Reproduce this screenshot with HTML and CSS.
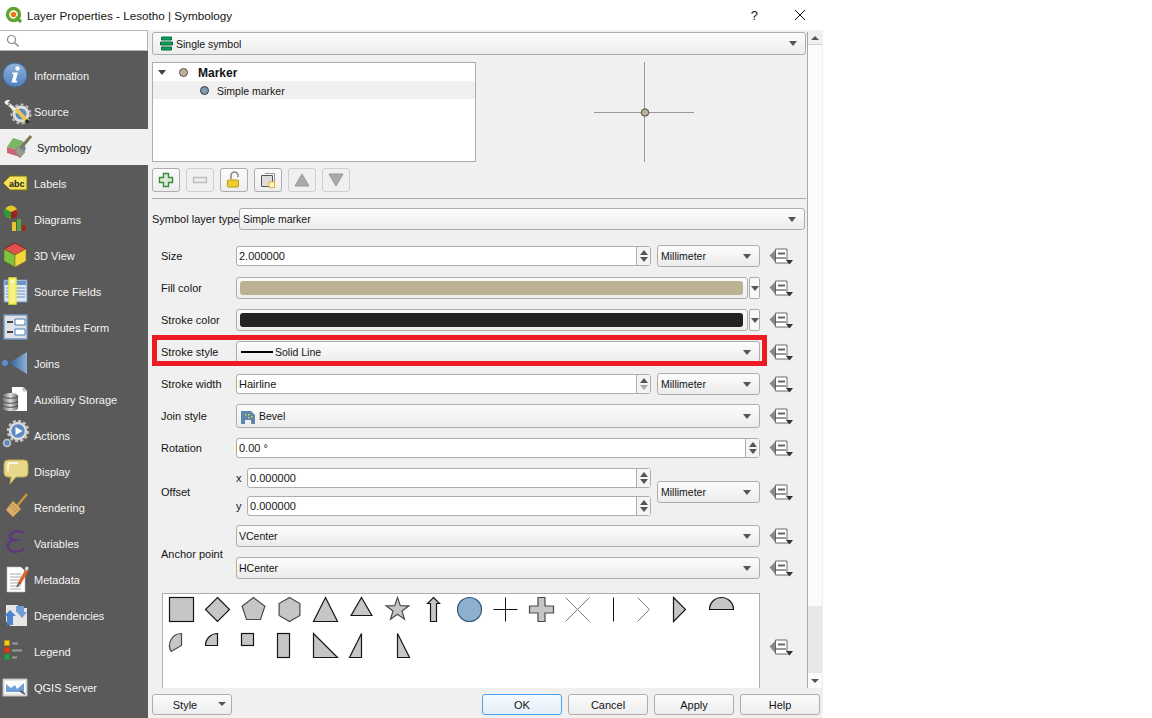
FILE: index.html
```html
<!DOCTYPE html>
<html lang="en">
<head>
<meta charset="utf-8">
<title>Layer Properties - Lesotho | Symbology</title>
<link rel="stylesheet" href="styles.css">
</head>
<body>
<svg class="defs" width="0" height="0" aria-hidden="true">
  <defs>
    <linearGradient id="gBlue" x1="0" y1="0" x2="0" y2="1"><stop offset="0" stop-color="#8fb4dd"/><stop offset="1" stop-color="#4f80bd"/></linearGradient>
    <linearGradient id="gJoin" x1="0" y1="0" x2="1" y2="0"><stop offset="0" stop-color="#2c5f9b"/><stop offset="1" stop-color="#8cb0d6"/></linearGradient>
    <linearGradient id="gDb" x1="0" y1="0" x2="1" y2="0"><stop offset="0" stop-color="#777"/><stop offset=".5" stop-color="#ddd"/><stop offset="1" stop-color="#666"/></linearGradient>
    <symbol id="dd" viewBox="0 0 24 17">
      <path d="M0.5 7.5 6.5 1.5V14.5Z" fill="#8a8a8a"/>
      <path d="M6.5 1H18V12.5H20V15H6.5Z" fill="#fff" stroke="#6a6a6a"/>
      <path d="M9 4.5h7v2h-7z" fill="#666"/>
      <path d="M6 10h11" stroke="#555" stroke-width="1.2"/>
      <path d="M17 12h7l-3.5 4.5z" fill="#333"/>
    </symbol>
  </defs>
</svg>
<div class="window">
  <header class="titlebar">
    <svg class="logo" width="18" height="18" viewBox="0 0 18 18"><circle cx="8.5" cy="8.5" r="6" fill="#fff" stroke="#5fa331" stroke-width="3.4"/><circle cx="8.5" cy="8.5" r="2.8" fill="#ee7913"/><path d="M11 11l5 5" stroke="#5fa331" stroke-width="3.4"/></svg>
    <span class="title-text">Layer Properties - Lesotho | Symbology</span>
    <span class="help-mark">?</span>
    <svg class="close" width="12" height="12" viewBox="0 0 12 12"><path d="M1 1l10 10M11 1L1 11" stroke="#111" fill="none"/></svg>
  </header>
  <div class="body">
    <aside class="sidebar">
      <div class="search"><svg width="14" height="14" viewBox="0 0 14 14"><circle cx="5.5" cy="5.5" r="4" fill="none" stroke="#8a8a8a" stroke-width="1.2"/><path d="M8.5 8.5l4 4" stroke="#8a8a8a" stroke-width="1.6"/></svg></div>
      <nav class="nav">
        <div class="nav-item"><svg class="nav-icon" viewBox="0 0 30 30"><circle cx="13" cy="15" r="12" fill="url(#gBlue)" stroke="#3d6ea8"/><circle cx="15.5" cy="8.5" r="2.2" fill="#fff"/><path d="M10.5 12.5h5.5l-2.4 8.2 2 .1-.8 1.7H9.4l2.4-8.4h-1.8z" fill="#fff"/></svg><span>Information</span></div>
        <div class="nav-item"><svg class="nav-icon" viewBox="0 0 30 30"><circle cx="19" cy="18" r="7" fill="#5d8ac2" stroke="#ddd" stroke-width="3"/><circle cx="19" cy="18" r="9.5" fill="none" stroke="#bbb" stroke-width="2" stroke-dasharray="3 2.5"/><path d="M5 7l11 9" stroke="#eee" stroke-width="3"/><path d="M2 6.5C3 3.500 6 3 9 4L6.500 6.500 7.500 9C5 10 3 9 2 6.500z" fill="#eee" stroke="#333" stroke-width=".7"/><path d="M14 13l11 12" stroke="#e9c94b" stroke-width="4"/><path d="M24 24l2.500 2.500" stroke="#222" stroke-width="3"/></svg><span>Source</span></div>
        <div class="nav-item active"><svg class="nav-icon" viewBox="0 0 30 30"><path d="M9 6l10 3-5 9-11-3z" fill="#7bb765"/><path d="M14 18l5-9 3 8-6 8z" fill="#6788bb"/><path d="M3 15l11 3 2 7-13-4z" fill="#c9677a"/><path d="M16 17l11-13" stroke="#7d7a57" stroke-width="3"/><path d="M14 14l7 6-5 6-5-7z" fill="#9a9a8c" stroke="#777" stroke-width=".5"/></svg><span>Symbology</span></div>
        <div class="nav-item"><svg class="nav-icon" viewBox="0 0 30 30"><path d="M8 8h17v14H8L1 15z" fill="#f3e25a" stroke="#7a6d12" stroke-width="1"/><text class="icon-abc" x="7" y="18.500">abc</text></svg><span>Labels</span></div>
        <div class="nav-item"><svg class="nav-icon" viewBox="0 0 30 30"><circle cx="9" cy="8" r="6.500" fill="#e4c52a"/><path d="M9 8L3 4.500A6.500 6.500 0 0 0 3.500 12L9 15z" fill="#2f9c3a"/><path d="M9 8v7a6.500 6.500 0 0 0 6-9.500z" fill="#9c2420"/><path d="M10 18h4v9h-4z" fill="#e8c530"/><path d="M15 15h4v12h-4z" fill="#56a53e"/><path d="M20 21h4v6h-4z" fill="#a52622"/></svg><span>Diagrams</span></div>
        <div class="nav-item"><svg class="nav-icon" viewBox="0 0 30 30"><path d="M13 3l11 6-11 6L2 9z" fill="#e0524f" stroke="#8c1f1f"/><path d="M2 9l11 6v12L2 21z" fill="#7fc241" stroke="#44761f" stroke-width=".6"/><path d="M24 9l-11 6v12l11-6z" fill="#f2d73a" stroke="#8d7a16" stroke-width=".6"/></svg><span>3D View</span></div>
        <div class="nav-item"><svg class="nav-icon" viewBox="0 0 30 30"><path d="M2 4h23v22H2z" fill="#dfe7f1" stroke="#6d8fb8"/><path d="M3 5h21v4H3z" fill="#6a94c6"/><path d="M13 12h10M13 15h10M13 18h10M13 21h10M4 12h3M4 15h3M4 18h3M4 21h3" stroke="#6a94c6"/><path d="M7 2h7v26H7z" fill="#f6f08a" stroke="#f1ea37" stroke-width="1.400"/><circle cx="10.500" cy="5.500" r="1.200" fill="#fff"/></svg><span>Source Fields</span></div>
        <div class="nav-item"><svg class="nav-icon" viewBox="0 0 30 30"><path d="M2 3h23v24H2z" fill="#dfe3e8" stroke="#7598c2" stroke-width="1.400"/><path d="M13 7h10v6H13zM13 17h10v6H13z" fill="#fff" stroke="#4a7cb5"/><path d="M5 10h6M5 20h6" stroke="#444" stroke-width="2"/></svg><span>Attributes Form</span></div>
        <div class="nav-item"><svg class="nav-icon" viewBox="0 0 30 30"><circle cx="3" cy="15" r="3" fill="#5c8fc9"/><path d="M7 15L25 4v22z" fill="url(#gJoin)"/></svg><span>Joins</span></div>
        <div class="nav-item"><svg class="nav-icon" viewBox="0 0 30 30"><path d="M10 3h11l4 4v20H10z" fill="#fff"/><path d="M21 3v4h4" fill="#ccc" stroke="#aaa" stroke-width=".6"/><path d="M1 12c0-4 15-4 15 0v12c0 4-15 4-15 0z" fill="url(#gDb)"/><path d="M1 12c0 3 15 3 15 0M1 17c0 3 15 3 15 0M1 21c0 3 15 3 15 0" fill="none" stroke="#444"/></svg><span>Auxiliary Storage</span></div>
        <div class="nav-item"><svg class="nav-icon" viewBox="0 0 30 30"><circle cx="16" cy="11" r="8" fill="#5d8ac2" stroke="#ddd" stroke-width="2.500"/><circle cx="16" cy="11" r="10" fill="none" stroke="#c4c4c4" stroke-width="2.500" stroke-dasharray="3 2.200"/><path d="M13.500 7l7 4-7 4z" fill="#fff"/><circle cx="5" cy="23" r="3.500" fill="#5d8ac2" stroke="#c4c4c4" stroke-width="1.500"/></svg><span>Actions</span></div>
        <div class="nav-item"><svg class="nav-icon" viewBox="0 0 30 30"><path d="M6 4h16q4 0 4 4v9q0 4-4 4H14l-6 7 1-7H6q-4 0-4-4V8q0-4 4-4z" fill="#e8d98a" stroke="#b9a84f"/><path d="M6 15V9q0-2 2-2h8" fill="none" stroke="#fff" stroke-width="1.500"/></svg><span>Display</span></div>
        <div class="nav-item"><svg class="nav-icon" viewBox="0 0 30 30"><path d="M15 14L25 2" stroke="#d29a35" stroke-width="2.200"/><path d="M11 9l8 8-8 8-7-7z" fill="#d8ad6e" stroke="#b98636" stroke-width=".6"/><path d="M8 14l6 6M10 12l6 6" stroke="#a87b38" stroke-width=".7"/></svg><span>Rendering</span></div>
        <div class="nav-item"><svg class="nav-icon" viewBox="0 0 30 30"><path d="M22 5c-3-2.500-12-2.500-14 2-1 3 2 5 6 5-5 0-9 2-8 7 1 6 12 6 16 1" fill="none" stroke="#5c3a7c" stroke-width="2.600"/><path d="M11 12h8" stroke="#5c3a7c" stroke-width="1.400"/></svg><span>Variables</span></div>
        <div class="nav-item"><svg class="nav-icon" viewBox="0 0 30 30"><path d="M5 3h14l4 4v21H5z" fill="#fff" stroke="#bbb" stroke-width=".6"/><path d="M8 10h11M8 13h11M8 16h9M8 19h8M8 22h11M8 25h11" stroke="#aaa"/><path d="M17 20L25 6" stroke="#e2632a" stroke-width="3.400"/><path d="M24 6l1.500-3" stroke="#ddd" stroke-width="3"/><path d="M17.500 19L15 23" stroke="#555" stroke-width="1.500"/></svg><span>Metadata</span></div>
        <div class="nav-item"><svg class="nav-icon" viewBox="0 0 30 30"><path d="M4 5h12v3h9v18H8v-4H4z" fill="#e6e6e6"/><path d="M14 6h8v6h3l-5 6-5-6h-1z" fill="#6f9fd6"/><path d="M2 16l6-6 6 6h-3v9H5v-9z" fill="#4c84c8"/></svg><span>Dependencies</span></div>
        <div class="nav-item"><svg class="nav-icon" viewBox="0 0 30 30"><rect x="2.500" y="4.500" width="5" height="5" fill="#f6d000" stroke="#b5892c"/><rect x="2.500" y="11.500" width="5" height="5" fill="#e63a10" stroke="#a0441f"/><rect x="2.500" y="18.500" width="5" height="5" fill="#1da34a" stroke="#3b7d44"/><path d="M10 7.500h6M10 14.500h10M10 21.500h5" stroke="#999" stroke-width="2"/></svg><span>Legend</span></div>
        <div class="nav-item"><svg class="nav-icon" viewBox="0 0 30 30"><path d="M1 7h24v17H1z" fill="#e9e9e9" stroke="#bbb"/><path d="M3 9h20v12H3z" fill="#fff"/><path d="M4 12l5 4 4-3 2 4 7-6v9H4z" fill="#6f9fd6"/><path d="M18 19l5 3" stroke="#555" stroke-width="1.500"/></svg><span>QGIS Server</span></div>
      </nav>
    </aside>
    <main class="main">
      <div class="scroll-row">
        <section class="content">
          <div class="combo combo-top"><svg class="sym-icon" width="13" height="15" viewBox="0 0 13 15"><path d="M1.500 1h10v3h-10zM0.500 6h12v3H0.500zM1.500 11h10v3h-10z" fill="#0fa15a" stroke="#0b6b3a"/></svg><span>Single symbol</span><i class="arrow"></i></div>
          <div class="symbol-row">
            <div class="tree">
              <div class="tree-row"><i class="expander"></i><i class="dot dot-sand"></i><b>Marker</b></div>
              <div class="tree-row tree-row-sel"><i class="dot dot-blue"></i><span>Simple marker</span></div>
            </div>
            <div class="preview"><svg width="100" height="100" viewBox="0 0 100 100"><path d="M0 50.500h100M50.500 0v100" stroke="#999"/><circle cx="51" cy="50.500" r="3.700" fill="#bdb194" stroke="#4a4a4a"/></svg></div>
          </div>
          <div class="tools">
            <div class="tool"><svg width="16" height="16" viewBox="0 0 16 16"><path d="M5.500 1.500h5v4h4v5h-4v4h-5v-4h-4v-5h4z" fill="#dcebd6" stroke="#3e8a41" stroke-width="1.400"/></svg></div>
            <div class="tool tool-off"><svg width="16" height="16" viewBox="0 0 16 16"><path d="M1.500 5.500h13v5h-13z" fill="#eee" stroke="#bbb" stroke-width="1.400"/></svg></div>
            <div class="tool"><svg width="16" height="18" viewBox="0 0 16 18"><path d="M8 8V4.500a3.500 3.500 0 0 1 7 0V6" fill="none" stroke="#8a8a8a" stroke-width="1.600" transform="translate(-3 0)"/><rect x="1.500" y="9" width="11" height="7" rx="1" fill="#f0cd2e" stroke="#b99a16"/></svg></div>
            <div class="tool"><svg width="16" height="16" viewBox="0 0 16 16"><path d="M5 1.500h9.500v9" fill="none" stroke="#999"/><path d="M1.500 3.500h11v11h-11z" fill="#ddd" stroke="#555"/><rect x="9" y="10" width="5.500" height="5.500" fill="#fff5c4" stroke="#d7b73a"/></svg></div>
            <div class="tool tool-off"><svg width="16" height="14" viewBox="0 0 16 14"><path d="M8 1l7 12H1z" fill="#aaa" stroke="#999"/></svg></div>
            <div class="tool tool-off"><svg width="16" height="14" viewBox="0 0 16 14"><path d="M1 1h14L8 13z" fill="#aaa" stroke="#999"/></svg></div>
          </div>
          <hr class="separator">
          <div class="layer-type"><label>Symbol layer type</label><div class="combo"><span>Simple marker</span><i class="arrow"></i></div></div>
          <div class="form">
            <div class="row"><label>Size</label><div class="field"><div class="spin"><span>2.000000</span><div class="spin-btns"><i class="up"></i><i class="down"></i></div></div><div class="combo unit"><span>Millimeter</span><i class="arrow"></i></div></div><svg class="dd"><use href="#dd"/></svg></div>
            <div class="row"><label>Fill color</label><div class="field"><div class="color-btn"><div class="swatch swatch-fill"></div></div><div class="color-menu"><i class="arrow"></i></div></div><svg class="dd"><use href="#dd"/></svg></div>
            <div class="row"><label>Stroke color</label><div class="field"><div class="color-btn"><div class="swatch swatch-stroke"></div></div><div class="color-menu"><i class="arrow"></i></div></div><svg class="dd"><use href="#dd"/></svg></div>
            <div class="row row-flagged"><div class="flag"></div><label>Stroke style</label><div class="field"><div class="combo combo-icon"><i class="line-sample"></i><span>Solid Line</span><i class="arrow"></i></div></div><svg class="dd"><use href="#dd"/></svg></div>
            <div class="row"><label>Stroke width</label><div class="field"><div class="spin"><span>Hairline</span><div class="spin-btns"><i class="up"></i><i class="down off"></i></div></div><div class="combo unit"><span>Millimeter</span><i class="arrow"></i></div></div><svg class="dd"><use href="#dd"/></svg></div>
            <div class="row"><label>Join style</label><div class="field"><div class="combo combo-tall"><svg class="bevel" width="15" height="15" viewBox="0 0 15 15"><path d="M0 2h10l4 4v9h-4v-4H4v4H0z" fill="#5f86ad"/><path d="M4 5h1.500v1.500H4zM7 5h1.500v1.500H7zM10 7h1.500v1.500H10zM7 8h1.500v1.500H7z" fill="#e9cf4a"/></svg><span>Bevel</span><i class="arrow"></i></div></div><svg class="dd"><use href="#dd"/></svg></div>
            <div class="row"><label>Rotation</label><div class="field"><div class="spin"><span>0.00 °</span><div class="spin-btns"><i class="up"></i><i class="down"></i></div></div></div><svg class="dd"><use href="#dd"/></svg></div>
            <div class="row row-offset"><label>Offset</label>
              <div class="field">
                <div class="offset-col">
                  <div class="offset-line"><span class="axis">x</span><div class="spin"><span>0.000000</span><div class="spin-btns"><i class="up"></i><i class="down"></i></div></div></div>
                  <div class="offset-line"><span class="axis">y</span><div class="spin"><span>0.000000</span><div class="spin-btns"><i class="up"></i><i class="down"></i></div></div></div>
                </div>
                <div class="combo unit"><span>Millimeter</span><i class="arrow"></i></div>
              </div><svg class="dd"><use href="#dd"/></svg>
            </div>
            <div class="row-anchor"><label>Anchor point</label>
              <div class="anchor-col">
                <div class="anchor-line"><div class="field"><div class="combo"><span>VCenter</span><i class="arrow"></i></div></div><svg class="dd"><use href="#dd"/></svg></div>
                <div class="anchor-line"><div class="field"><div class="combo"><span>HCenter</span><i class="arrow"></i></div></div><svg class="dd"><use href="#dd"/></svg></div>
              </div>
            </div>
            <div class="row-shapes">
              <div class="shapes">
                <svg width="596" height="100" viewBox="0 0 596 100">
                  <g class="sh" transform="translate(18.500 15.500)"><rect x="-12" y="-12" width="24" height="24"/></g>
                  <g class="sh" transform="translate(54.500 15.500)"><path d="M0-12 12 0 0 12-12 0z"/></g>
                  <g class="sh sh-grey" transform="translate(90.500 15.500)"><path d="M0-12 11.400-3.300 7 10H-7L-11.400-3.300z"/></g>
                  <g class="sh sh-grey" transform="translate(126.500 15.500)"><path d="M0-12 10.400-6V6L0 12-10.400 6V-6z"/></g>
                  <g class="sh" transform="translate(162.500 15.500)"><path d="M0-12 12 12H-12z"/></g>
                  <g class="sh" transform="translate(198.500 15.500)"><path d="M0-12 10.400 6H-10.400z"/></g>
                  <g class="sh sh-grey" transform="translate(234.500 15.500)"><path d="M0-12 2.800-3.800 11.400-3.700 4.500 1.400 7 9.700 0 4.700-7 9.700-4.500 1.400-11.400-3.700-2.800-3.800z"/></g>
                  <g class="sh" transform="translate(270.500 15.500)"><path d="M0-12 6-6H3V12H-3V-6H-6z"/></g>
                  <g class="sh sh-blue" transform="translate(306.500 15.500)"><circle r="12"/></g>
                  <g class="sh sh-line" transform="translate(342.500 15.500)"><path d="M-12 0H12M0-12V12"/></g>
                  <g class="sh sh-grey" transform="translate(378.500 15.500)"><path d="M-3.500-12H3.500V-3.500H12V3.500H3.500V12H-3.500V3.500H-12V-3.500H-3.500z"/></g>
                  <g class="sh sh-line sh-thin" transform="translate(414.500 15.500)"><path d="M-12-12 12 12M12-12-12 12"/></g>
                  <g class="sh sh-line" transform="translate(450.500 15.500)"><path d="M0-12V12"/></g>
                  <g class="sh sh-line sh-thin" transform="translate(486.500 15.500)"><path d="M-12-12 0 0-12 12"/></g>
                  <g class="sh" transform="translate(522.500 15.500)"><path d="M-12-12 0 0-12 12z"/></g>
                  <g class="sh" transform="translate(558.500 15.500)"><path d="M-12 0A12 12 0 0 1 12 0z"/></g>
                  <g class="sh sh-grey" transform="translate(18.500 51.500)"><path d="M0-12A12 12 0 0 0-10.400 6L0 0z"/></g>
                  <g class="sh" transform="translate(54.500 51.500)"><path d="M0-12A12 12 0 0 0-12 0H0z"/></g>
                  <g class="sh" transform="translate(90.500 51.500)"><rect x="-12" y="-12" width="12" height="12"/></g>
                  <g class="sh" transform="translate(126.500 51.500)"><rect x="-12" y="-12" width="12" height="24"/></g>
                  <g class="sh" transform="translate(162.500 51.500)"><path d="M-12-12 12 12H-12z"/></g>
                  <g class="sh" transform="translate(198.500 51.500)"><path d="M0-12V12H-12z"/></g>
                  <g class="sh" transform="translate(234.500 51.500)"><path d="M0-12 12 12H0z"/></g>
                </svg>
              </div>
              <svg class="dd"><use href="#dd"/></svg>
            </div>
          </div>
        </section>
        <div class="scrollbar">
          <div class="sb-btn"><i class="sb-up"></i></div>
          <div class="sb-thumb"></div>
          <div class="sb-track"></div>
          <div class="sb-end"><i class="sb-down"></i></div>
        </div>
      </div>
      <footer class="buttons">
        <div class="btn btn-style"><span>Style</span><i class="arrow"></i></div>
        <div class="btn btn-ok push">OK</div>
        <div class="btn">Cancel</div>
        <div class="btn">Apply</div>
        <div class="btn">Help</div>
      </footer>
    </main>
  </div>
</div>
</body>
</html>
```
FILE: styles.css
```css
* { box-sizing: border-box; }
html, body { margin: 0; height: 100%; background: #fff; }
body { font: 11px "Liberation Sans", Arial, sans-serif; color: #141414; overflow: hidden; }
i { display: block; font-style: normal; }
label { display: block; white-space: nowrap; }
.defs { position: absolute; }

.window { width: 823px; height: 718px; display: flex; flex-direction: column; }

.titlebar { height: 30px; background: #fff; display: flex; align-items: center; padding-left: 5px; flex: none; }
.logo { flex: none; }
.title-text { margin-left: 4px; font-size: 11.7px; }
.help-mark { margin-left: auto; margin-right: 36px; font-size: 13px; }
.close { margin-right: 17px; }

.body { flex: 1; display: flex; min-height: 0; background: #f0f0f0; }

.sidebar { width: 148px; flex: none; display: flex; flex-direction: column; }
.search { height: 21px; width: 148px; background: #fff; border: 1px solid #b5b5b5; border-left: 0; flex: none; padding: 3px 0 0 6px; display: flex; }
.nav { flex: 1; background: #5a5a5a; padding-top: 6px; }
.nav-item { height: 36px; display: flex; align-items: center; padding-left: 2px; color: #f4f4f4; }
.nav-item span { padding-top: 2px; padding-left: 2px; }
.nav-icon { width: 30px; height: 30px; flex: none; }
.nav-item.active { background: #f0f0f0; color: #141414; padding-left: 4px; }
.nav-item.active span { padding-left: 3px; }
.icon-abc { font: bold 9px "Liberation Sans", sans-serif; fill: #222; }

.main { flex: 1; min-width: 0; display: flex; flex-direction: column; }
.scroll-row { flex: 1; display: flex; min-height: 0; }
.content { flex: 1; min-width: 0; padding: 2px 1px 0 4px; overflow: hidden; }

.combo { height: 22px; flex: 1; min-width: 0; display: flex; align-items: center; padding: 0 4px 0 3px; border: 1px solid #adadad; border-radius: 3px; background: linear-gradient(#fcfcfc, #ececec); font-size: 10.5px; }
.arrow { width: 0; height: 0; margin-left: auto; margin-right: 4px; border: 4.5px solid transparent; border-top: 5px solid #555; border-bottom: 0; flex: none; }
.combo-top { height: 23px; padding-left: 7px; }
.combo-top span { padding-top: 1px; }
.sym-icon { margin-right: 3px; flex: none; }
.combo-tall { height: 24px; padding-left: 4px; }
.combo-icon { padding-left: 4px; }
.bevel { margin-right: 3px; flex: none; }
.line-sample { width: 32px; height: 2px; background: #000; margin-right: 2px; flex: none; }

.symbol-row { display: flex; margin-top: 7px; height: 100px; }
.tree { width: 324px; background: #fff; border: 1px solid #adadad; flex: none; }
.tree-row { height: 18px; display: flex; align-items: center; padding-left: 5px; }
.tree-row-sel { background: #f0f0f0; padding-left: 47px; font-size: 10.5px; }
.tree-row-sel span { margin-left: 8px; padding-top: 1px; }
.tree-row b { margin-left: 10px; font-size: 12px; padding-top: 1px; }
.expander { width: 0; height: 0; border: 4.5px solid transparent; border-top: 5px solid #444; border-bottom: 0; margin-right: 13px; }
.dot { width: 9px; height: 9px; border-radius: 50%; border: 1px solid #555; flex: none; }
.dot-sand { background: #bdb194; }
.dot-blue { background: #7e9bb0; border-color: #334; }
.preview { flex: 1; display: flex; justify-content: center; padding-left: 6px; }

.tools { display: flex; gap: 6px; margin-top: 6px; }
.tool { width: 28px; height: 24px; display: flex; align-items: center; justify-content: center; border: 1px solid #adadad; border-radius: 3px; background: linear-gradient(#fbfbfb, #ededed); }
.tool-off { border-color: #cfcfcf; background: #f0f0f0; }

.separator { height: 1px; border: 0; background: #a8a8a8; margin: 6px 0 9px; }

.layer-type { display: flex; align-items: center; height: 22px; padding-right: 1px; }
.layer-type label { width: 87px; flex: none; }

.form { margin-top: 10px; padding-left: 9px; }
.row { height: 32px; display: flex; align-items: center; position: relative; }
.row > label, .row-anchor > label { width: 75px; flex: none; }
.field { width: 524px; flex: none; display: flex; align-items: center; gap: 6px; }
.dd { width: 24px; height: 17px; margin-left: 9px; flex: none; }

.spin { flex: 1; min-width: 0; height: 20px; display: flex; align-items: center; padding-left: 2px; background: #fff; border: 1px solid #adadad; border-radius: 3px; }
.spin-btns { margin-left: auto; width: 14px; height: 100%; border-left: 1px solid #adadad; background: #f4f4f4; display: flex; flex-direction: column; align-items: center; justify-content: center; gap: 2px; flex: none; }
.up, .down { width: 0; height: 0; border: 4px solid transparent; }
.up { border-bottom: 5px solid #555; border-top: 0; }
.down { border-top: 5px solid #555; border-bottom: 0; }
.down.off { border-top-color: #aaa; }
.unit { flex: 0 0 103px; }

.color-btn { flex: 1; min-width: 0; height: 22px; padding: 3px 4px 3px 3px; border: 1px solid #adadad; border-radius: 3px; background: linear-gradient(#fbfbfb, #ededed); }
.swatch { height: 100%; border-radius: 3px; }
.swatch-fill { background: #bdb194; }
.swatch-stroke { background: #232323; }
.color-menu { width: 11px; margin-left: -5px; height: 22px; border: 1px solid #adadad; border-radius: 2px; background: #f8f8f8; display: flex; align-items: center; justify-content: center; flex: none; }
.color-menu .arrow { margin: 0; }

.flag { position: absolute; left: -9px; top: -1px; width: 615px; height: 31px; border: 5px solid #ed1c24; z-index: 1; pointer-events: none; }
.row-flagged { z-index: 1; }

.row-offset { height: 56px; }
.offset-col { flex: 1; min-width: 0; display: flex; flex-direction: column; }
.offset-line { height: 28px; display: flex; align-items: center; }
.axis { width: 11px; flex: none; }

.row-anchor { display: flex; align-items: center; height: 64px; }
.row-anchor > label { padding-top: 4px; }
.row-anchor .combo { padding-left: 2px; }
.anchor-col { display: flex; flex-direction: column; }
.anchor-line { height: 32px; display: flex; align-items: center; }

.row-shapes { display: flex; align-items: center; margin-top: 9px; margin-left: 1px; }
.shapes { width: 598px; height: 108px; background: #fff; border: 1px solid #adadad; flex: none; }
.shapes svg { display: block; }
.row-shapes .dd { margin-left: 9px; }
.sh rect, .sh path, .sh circle { fill: #c6c6c6; stroke: #161616; stroke-width: 1.2; }
.sh-grey path { stroke: #4a4a4a; }
.sh-blue circle { fill: #8eb0cf; stroke: #2f5a80; }
.sh-line path { fill: none; stroke: #111; stroke-width: 1; }
.sh-thin path { stroke: #7e7e7e; }

.scrollbar { width: 15px; flex: none; margin-right: 1px; border-left: 1px solid #a8a8a8; margin-top: 2px; display: flex; flex-direction: column; background: #f0f0f0; }
.sb-btn { height: 13px; display: flex; align-items: center; justify-content: center; border-bottom: 1px solid #cfcfcf; flex: none; }
.sb-thumb { height: 561px; background: #fbfbfb; flex: none; }
.sb-track { flex: 1; background: #e8e8e8; }
.sb-end { height: 15px; display: flex; align-items: center; justify-content: center; background: #fbfbfb; flex: none; }
.sb-up { border: 4px solid transparent; border-bottom: 4px solid #555; border-top: 0; width: 0; height: 0; }
.sb-down { border: 4px solid transparent; border-top: 4px solid #555; border-bottom: 0; width: 0; height: 0; }

.buttons { height: 30px; flex: none; display: flex; align-items: flex-start; gap: 6px; padding: 6px 3px 0 4px; }
.btn { width: 80px; height: 21px; display: flex; align-items: center; justify-content: center; border: 1px solid #adadad; border-radius: 3px; background: linear-gradient(#fbfbfb, #ededed); }
.btn-ok { border-color: #45a3f0; background: linear-gradient(#f4f9fd, #e6f0f8); }
.btn-style { position: relative; }
.btn-style span { margin-right: 14px; }
.btn-style .arrow { position: absolute; right: 1px; top: 7px; border-width: 4px; border-top-width: 4px; }
.push { margin-left: auto; }
```
